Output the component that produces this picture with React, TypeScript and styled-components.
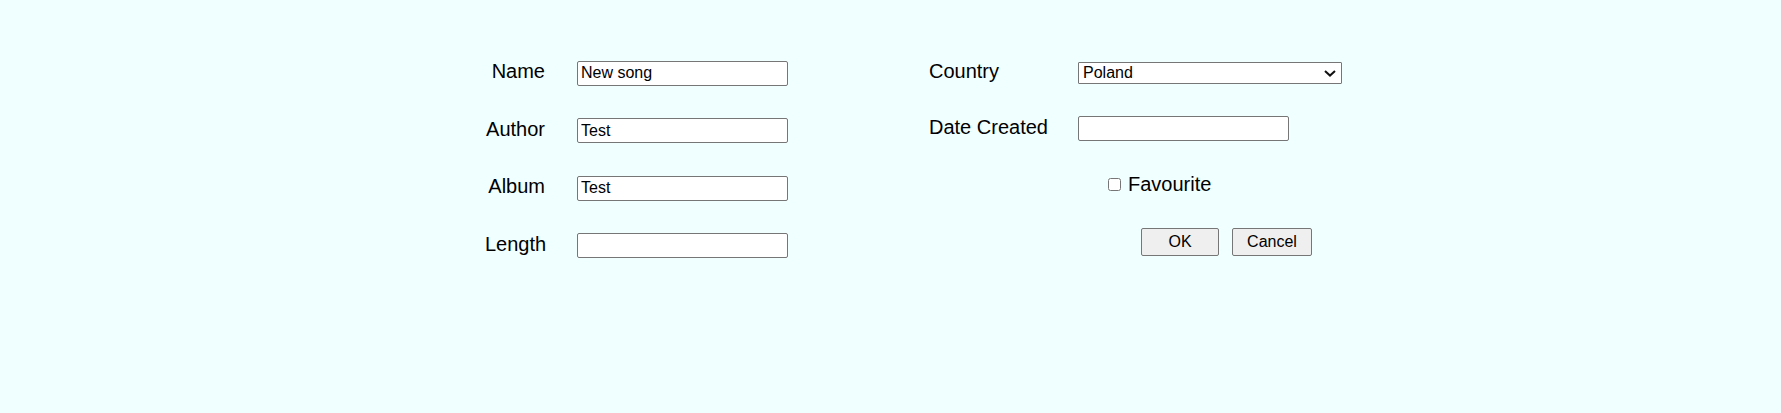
import React from 'react'
import styled, { createGlobalStyle } from 'styled-components'

const GlobalStyle = createGlobalStyle`
  html, body {
    margin: 0;
    height: 100%;
    background-color: #f0ffff;
  }
  body {
    font-family: "Liberation Sans", Arial, sans-serif;
    color: #000;
  }
`

const Page = styled.div`
  display: flex;
  align-items: flex-start;
  gap: 141px;
  padding: 60px 0 0 485px;
  height: 413px;
  box-sizing: border-box;
`

const FieldGrid = styled.div<{ $labelWidth: number; $colGap: number }>`
  display: grid;
  grid-template-columns: ${(p) => p.$labelWidth}px auto;
  column-gap: ${(p) => p.$colGap}px;
  row-gap: 32px;
  align-items: baseline;
`

const Label = styled.label<{ $align?: 'left' | 'right' }>`
  font-size: 20px;
  text-align: ${(p) => p.$align || 'right'};
`

const TextInput = styled.input`
  box-sizing: border-box;
  width: 211px;
  height: 25px;
  padding: 1px 3px;
  font-family: "Liberation Sans", Arial, sans-serif;
  font-size: 16px;
  border: 1px solid #767676;
  border-radius: 2px;
  background: #fff;
  justify-self: start;
`

const SelectWrap = styled.div`
  position: relative;
  display: inline-flex;
  justify-self: start;
`

const Select = styled.select`
  box-sizing: border-box;
  width: 264px;
  height: 22px;
  padding: 0 20px 0 4px;
  font-family: "Liberation Sans", Arial, sans-serif;
  font-size: 16px;
  border: 1px solid #767676;
  border-radius: 1px;
  background: #fff;
  color: #000;
  appearance: none;
  -webkit-appearance: none;
`

const Chevron = styled.svg`
  position: absolute;
  right: 6px;
  top: 8px;
  width: 12px;
  height: 7px;
  pointer-events: none;
`

const CheckRow = styled.div`
  grid-column: 2;
  display: flex;
  align-items: baseline;
  padding-left: 26px;
  font-size: 20px;
`

const CheckBox = styled.input`
  width: 13px;
  height: 13px;
  margin: 0 7px 0 4px;
`

const ButtonRow = styled.div`
  grid-column: 2;
  display: flex;
  gap: 13px;
  padding-left: 63px;
  margin-top: 0;
`

const Button = styled.button<{ $width: number }>`
  box-sizing: border-box;
  width: ${(p) => p.$width}px;
  height: 28px;
  padding: 0;
  font-family: "Liberation Sans", Arial, sans-serif;
  font-size: 16px;
  color: #000;
  background: #efefef;
  border: 1px solid #767676;
  border-radius: 2px;
`

export default function App() {
  return (
    <>
      <GlobalStyle />
      <Page>
        <FieldGrid $labelWidth={60} $colGap={32}>
          <Label>Name</Label>
          <TextInput defaultValue="New song" />
          <Label>Author</Label>
          <TextInput defaultValue="Test" />
          <Label>Album</Label>
          <TextInput defaultValue="Test" />
          <Label>Length</Label>
          <TextInput defaultValue="" />
        </FieldGrid>
        <FieldGrid $labelWidth={149} $colGap={0}>
          <Label $align="left">Country</Label>
          <SelectWrap>
            <Select defaultValue="Poland">
              <option>Poland</option>
              <option>Germany</option>
              <option>United Kingdom</option>
              <option>United States</option>
            </Select>
            <Chevron viewBox="0 0 12 7">
              <path d="M1 1 L6 5.6 L11 1" fill="none" stroke="#111" strokeWidth="2" />
            </Chevron>
          </SelectWrap>
          <Label $align="left">Date Created</Label>
          <TextInput defaultValue="" />
          <CheckRow>
            <CheckBox type="checkbox" id="fav" />
            <label htmlFor="fav">Favourite</label>
          </CheckRow>
          <ButtonRow>
            <Button $width={78}>OK</Button>
            <Button $width={80}>Cancel</Button>
          </ButtonRow>
        </FieldGrid>
      </Page>
    </>
  )
}
